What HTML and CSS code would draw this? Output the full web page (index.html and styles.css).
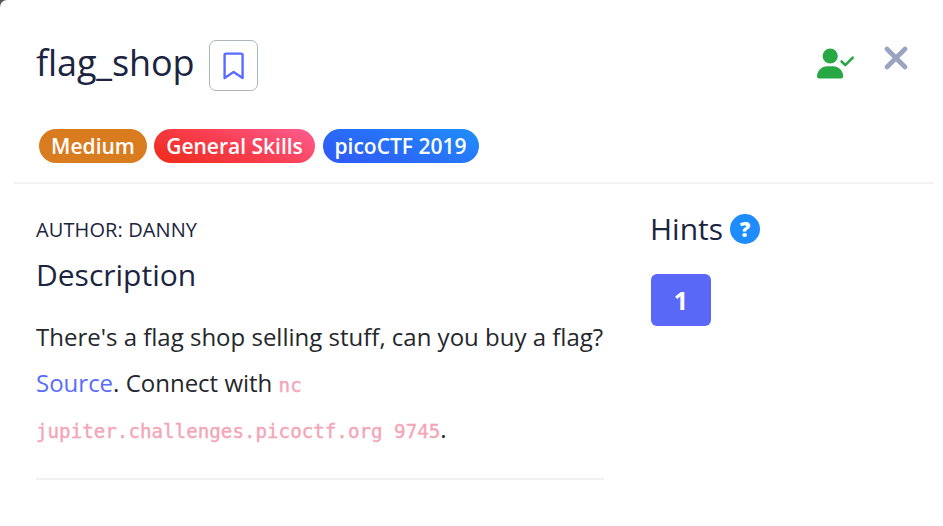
FILE: index.html
```html
<!DOCTYPE html>
<html lang="en">
<head>
<meta charset="utf-8">
<title>flag_shop</title>
<link rel="stylesheet" href="styles.css">
</head>
<body>
<main class="modal">
  <header class="head">
    <div class="title-row">
      <h1 class="title">flag_shop</h1>
      <button class="bookmark" aria-label="Bookmark">
        <svg width="22" height="28" viewBox="0 0 22 28"><path d="M1.600 26V3Q1.600 1.600 3 1.600H18.200Q19.600 1.600 19.600 3V26L10.600 20Z" fill="none" stroke="#5a6bff" stroke-width="2.400" stroke-linejoin="round"/></svg>
      </button>
      <svg class="user" width="38" height="32" viewBox="0 0 38 32"><circle cx="13.2" cy="8" r="7.6" fill="#28a745"/><path d="M0 28.6C0 22.5 4.600 18.200 10.400 18.200H16C21.800 18.200 26.200 22.500 26.200 28.600Q26.200 30.400 24.400 30.400H1.800Q0 30.400 0 28.600Z" fill="#28a745"/><path d="M24.600 13.500L28.300 17.100L35.700 9.700" fill="none" stroke="#28a745" stroke-width="2.600" stroke-linecap="round" stroke-linejoin="round"/></svg>
      <svg class="close" width="24" height="24" viewBox="0 0 24 24"><path d="M3 3L21 21M21 3L3 21" stroke="#9aa3bf" stroke-width="4.600" stroke-linecap="round"/></svg>
    </div>
    <div class="tags">
      <span class="tag medium">Medium</span>
      <span class="tag skills">General Skills</span>
      <span class="tag event">picoCTF 2019</span>
    </div>
  </header>
  <div class="body">
    <section class="info">
      <div class="author">AUTHOR: DANNY</div>
      <h2 class="subtitle">Description</h2>
      <p class="text">There's a flag shop selling stuff, can you buy a flag?<br><a class="link">Source</a>. Connect with <code>nc<br>jupiter.challenges.picoctf.org 9745</code>.</p>
    </section>
    <aside class="hints">
      <div class="hints-head"><h2 class="subtitle">Hints</h2><span class="help">?</span></div>
      <button class="hint">1</button>
    </aside>
  </div>
</main>
</body>
</html>
```
FILE: styles.css
```css
* { box-sizing: border-box; }
body { margin: 0; background: #555; font-family: "Open Sans", sans-serif; color: #1b2540; overflow: hidden; }
h1, h2, p { margin: 0; font-weight: 400; }
button { padding: 0; font: inherit; }
svg { display: block; }
.modal { height: 526px; padding-left: 14px; background: #fff; border-top-left-radius: 7px; }
.head { width: 920px; height: 184px; padding: 40px 0 0 22px; border-bottom: 2px solid #f2f2f2; }
.title-row { display: flex; height: 51px; }
.title { width: 173px; font-size: 36px; line-height: 46px; letter-spacing: -0.1px; }
.bookmark { display: flex; align-items: center; justify-content: center; width: 49px; height: 51px; border: 1px solid #adb5bd; border-radius: 7px; background: #fff; }
.user { margin: 8px 29px 0 auto; }
.close { margin: 6px 26px 0 0; }
.tags { display: flex; gap: 8px; margin: 38px 0 0 3px; }
.tag { display: flex; align-items: center; justify-content: center; height: 34px; padding-bottom: 1px; border-radius: 17px; color: #fff; font-size: 21px; font-weight: 600; white-space: nowrap; }
.medium { width: 108px; background: #d97c20; }
.skills { width: 161px; margin-left: -1px; background: linear-gradient(22deg, #ee2a18, #f83e50 50%, #fe5e92); }
.event { width: 156px; padding-right: 1px; background: linear-gradient(22deg, #3058f6, #2870f8 50%, #1f8ffa); }
.body { display: flex; padding-left: 22px; }
.info { width: 568px; height: 296px; padding-top: 32px; border-bottom: 2px solid #f0f0f0; }
.author { font-size: 20px; line-height: 28px; letter-spacing: 0.1px; }
.subtitle { font-size: 30px; line-height: 40px; }
.info .subtitle { margin-top: 11px; }
.text { margin-top: 18.5px; color: #24272b; font-size: 24px; line-height: 46px; white-space: nowrap; }
.link { color: #5a6bff; }
code { font: 19.200px/1 "DejaVu Sans Mono", monospace; color: #f4a6b7; -webkit-text-stroke: 0.4px #f4a6b7; }
.hints { padding: 25px 0 0 46px; }
.hints-head { display: flex; align-items: center; gap: 7px; }
.help { display: flex; align-items: center; justify-content: center; width: 30px; height: 30px; border-radius: 50%; background: #1e8cfa; color: #fff; font-size: 21px; font-weight: 800; }
.hint { display: block; width: 60px; height: 52px; margin: 25px 0 0 1px; border: 0; border-radius: 6px; background: #5968f6; color: #fff; font-size: 25px; font-weight: 700; }
```
